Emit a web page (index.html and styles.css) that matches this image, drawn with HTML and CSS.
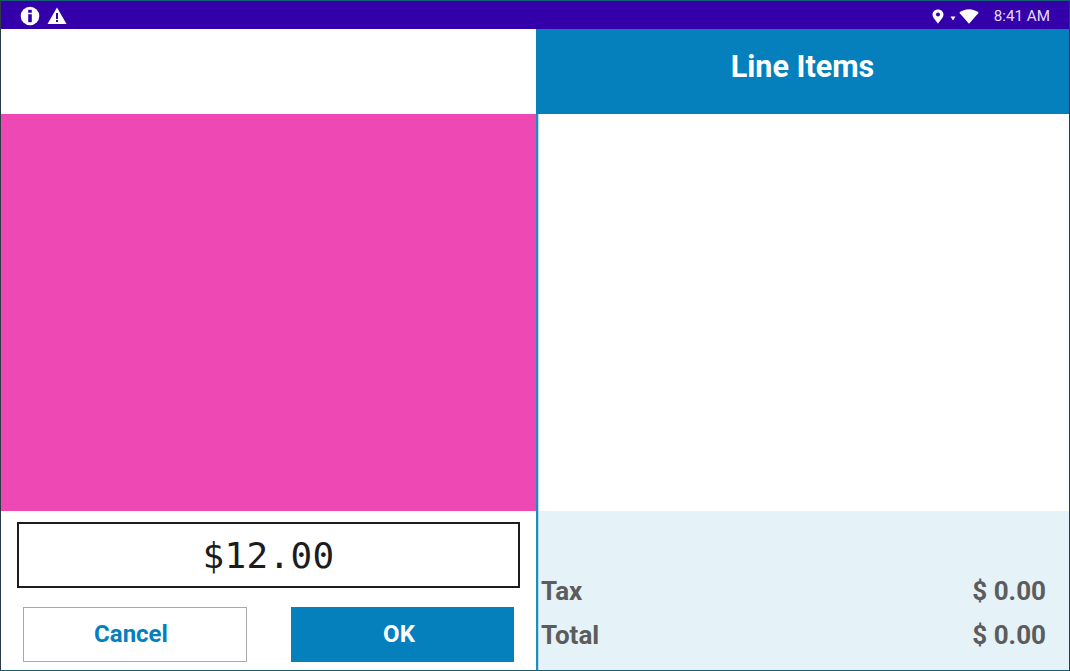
FILE: index.html
```html
<!DOCTYPE html>
<html lang="en">
<head>
  <meta charset="UTF-8" />
  <title>Line Items</title>
  <link rel="stylesheet" href="styles.css">
</head>
<body>

  <div class="screen">
    <div class="status-bar">
      <div class="status-left">
        <svg class="icon" width="20" height="20" viewBox="0 0 20 20">
          <circle cx="10" cy="10" r="9.3" fill="#fff"/>
          <rect x="8.2" y="3.8" width="3.6" height="3" fill="#3300aa"/>
          <rect x="8.2" y="8.2" width="3.6" height="8" fill="#3300aa"/>
        </svg>
        <svg class="icon" width="20" height="18" viewBox="0 0 20 18">
          <path d="M10 0.5 L19.5 17 H0.5 Z" fill="#fff"/>
          <rect x="9" y="6" width="2" height="6" fill="#3300aa"/>
          <rect x="9" y="13" width="2" height="2" fill="#3300aa"/>
        </svg>
      </div>
      <div class="status-right">
        <svg class="icon pin" width="12" height="15" viewBox="0 0 12 15">
          <path fill-rule="evenodd" d="M6 0.5 C9 0.5 11.5 2.7 11.5 5.5 C11.5 8.8 7.5 12 6 14.8 C4.5 12 0.5 8.8 0.5 5.5 C0.5 2.7 3 0.5 6 0.5 Z M6 3.4 A2 2 0 1 0 6 7.4 A2 2 0 1 0 6 3.4 Z" fill="#fff"/>
        </svg>
        <svg class="icon caret" width="6" height="5" viewBox="0 0 6 5">
          <path d="M0.5 0.5 H5.5 L3 4.5 Z" fill="#fff"/>
        </svg>
        <svg class="icon wifi" width="20" height="15" viewBox="0 0 20 15">
          <path d="M0.3 3.8 C3 1.5 6.3 0.3 10 0.3 C13.7 0.3 17 1.5 19.7 3.8 L10 14.7 Z" fill="#fff"/>
        </svg>
        <span class="clock">8:41 AM</span>
      </div>
    </div>

    <div class="main">
      <div class="left-pane">
        <div class="left-top"></div>
        <div class="color-block"></div>
        <div class="entry">
          <div class="amount">$12.00</div>
          <div class="actions">
            <button class="btn btn-cancel">Cancel</button>
            <button class="btn btn-ok">OK</button>
          </div>
        </div>
      </div>

      <div class="right-pane">
        <div class="items-header">Line Items</div>
        <div class="items-body">
          <div class="items-list"></div>
          <div class="summary">
            <div class="summary-row"><span>Tax</span><span>$ 0.00</span></div>
            <div class="summary-row"><span>Total</span><span>$ 0.00</span></div>
          </div>
        </div>
      </div>
    </div>
  </div>

</body>
</html>
```

FILE: styles.css
```css
html, body {
  margin: 0;
  height: 100%;
  overflow: hidden;
}

body {
  background: #fff;
  font-family: Roboto, "Liberation Sans", sans-serif;
}

.screen {
  width: 1070px;
  height: 671px;
  box-sizing: border-box;
  display: flex;
  flex-direction: column;
  border: 1px solid #2b3a44;
  border-top-color: #14606e;
  border-bottom-color: #14606e;
}

.status-bar {
  height: 28px;
  flex: none;
  background: #3300aa;
  display: flex;
  justify-content: space-between;
  align-items: center;
  color: #e6ddf5;
}

.status-left {
  display: flex;
  align-items: center;
  gap: 7px;
  padding: 2px 0 0 19px;
}

.status-right {
  display: flex;
  align-items: center;
  padding: 2px 19px 0 0;
}

.icon {
  display: block;
}

.caret {
  margin: 5px 3px 0 6px;
}

.wifi {
  margin-right: 15px;
}

.clock {
  font-size: 15.2px;
}

.main {
  flex: 1;
  display: flex;
  min-height: 0;
}

.left-pane {
  width: 535px;
  flex: none;
  display: flex;
  flex-direction: column;
}

.left-top {
  height: 85px;
  flex: none;
}

.color-block {
  height: 397px;
  flex: none;
  background: #ee48b5;
}

.entry {
  flex: 1;
  padding: 11px 16px 0;
}

.amount {
  height: 66px;
  box-sizing: border-box;
  border: 2px solid #1c1c1c;
  font-family: "DejaVu Sans Mono", "Liberation Mono", monospace;
  font-size: 36px;
  letter-spacing: 0.3px;
  color: #1c1c1c;
  display: flex;
  align-items: center;
  justify-content: center;
}

.actions {
  display: flex;
  justify-content: space-between;
  margin-top: 19px;
  padding: 0 6px;
}

.btn {
  width: 224px;
  height: 55px;
  box-sizing: border-box;
  font-family: inherit;
  font-size: 24px;
  font-weight: 700;
  padding: 0 8px 2px 0;
  border-radius: 0;
}

.btn-cancel {
  background: #fff;
  border: 1px solid #a9a9a9;
  color: #0580bd;
}

.btn-ok {
  width: 223px;
  padding-right: 7px;
  background: #0580bd;
  border: none;
  color: #fff;
}

.right-pane {
  flex: 1;
  display: flex;
  flex-direction: column;
}

.items-header {
  height: 85px;
  box-sizing: border-box;
  padding-bottom: 10px;
  flex: none;
  background: #0580bd;
  color: #fff;
  font-size: 30.5px;
  font-weight: 700;
  display: flex;
  align-items: center;
  justify-content: center;
}

.items-body {
  flex: 1;
  display: flex;
  flex-direction: column;
  border-left: 2px solid #1f8cc4;
}

.items-list {
  height: 397px;
  flex: none;
  border-left: 1px solid #b5dcef;
}

.summary {
  flex: 1;
  background: #e5f2f8;
  border-left: 1px solid #b5dcef;
  color: #5c5c5c;
  font-size: 26px;
  font-weight: 700;
  display: flex;
  flex-direction: column;
  justify-content: flex-end;
  padding: 0 23px 13px 2px;
}

.summary-row {
  height: 44px;
  display: flex;
  justify-content: space-between;
  align-items: center;
}
```
